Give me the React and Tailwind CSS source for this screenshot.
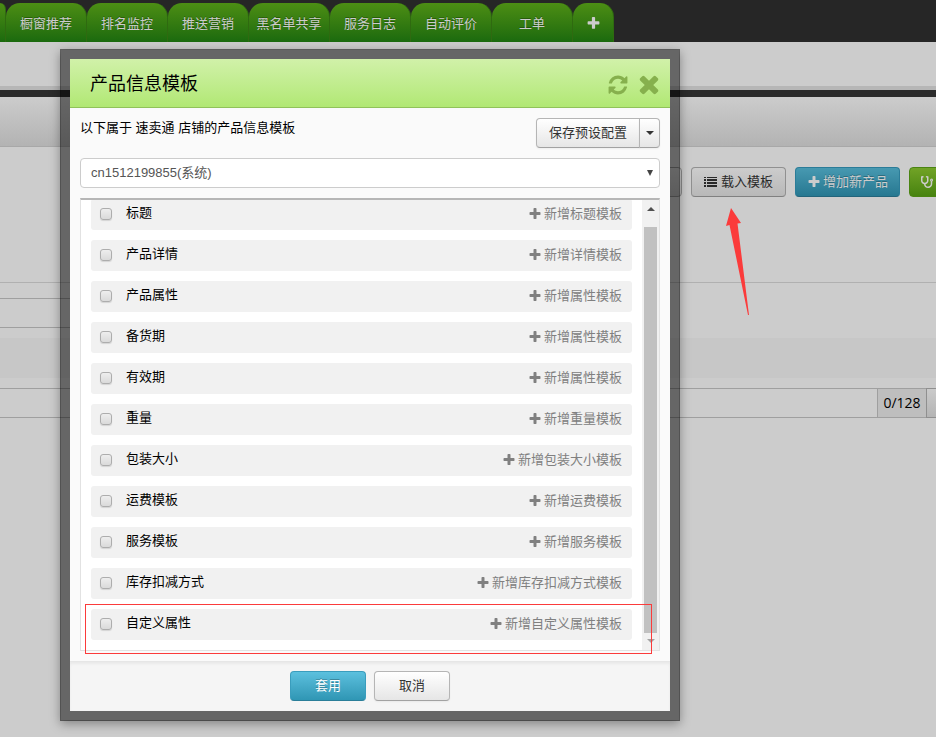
import React from "react";
import { FaStethoscope } from "react-icons/fa";

const PLUS =
  "M1600 736v192q0 40-28 68t-68 28h-416v416q0 40-28 68t-68 28h-192q-40 0-68-28t-28-68v-416h-416q-40 0-68-28t-28-68v-192q0-40 28-68t68-28h416v-416q0-40 28-68t68-28h192q40 0 68 28t28 68v416h416q40 0 68 28t28 68z";
const TIMES =
  "M1490 1322q0 40-28 68l-136 136q-28 28-68 28t-68-28l-294-294-294 294q-28 28-68 28t-68-28l-136-136q-28-28-28-68t28-68l294-294-294-294q-28-28-28-68t28-68l136-136q28-28 68-28t68 28l294 294 294-294q28-28 68-28t68 28l136 136q28 28 28 68t-28 68l-294 294 294 294q28 28 28 68z";
const REFRESH =
  "M1639 1056q0 5-1 7-64 268-268 434.5t-478 166.5q-146 0-282.5-55t-243.5-157l-129 129q-19 19-45 19t-45-19-19-45v-448q0-26 19-45t45-19h448q26 0 45 19t19 45-19 45l-137 137q71 66 161 102t187 36q134 0 250-65t186-179q11-17 53-117 8-23 30-23h192q13 0 22.5 9.5t9.5 22.5zm25-800v448q0 26-19 45t-45 19h-448q-26 0-45-19t-19-45 19-45l138-138q-148-137-349-137-134 0-250 65t-186 179q-11 17-53 117-8 23-30 23h-199q-13 0-22.5-9.5t-9.5-22.5v-7q65-268 270-434.5t480-166.5q146 0 284 55.5t245 156.5l130-129q19-19 45-19t45 19 19 45z";

function Icon({ path, className }) {
  return (
    <svg viewBox="0 0 1792 1792" fill="currentColor" aria-hidden="true" className={className}>
      <path d={path} />
    </svg>
  );
}

function ListIcon() {
  return (
    <svg viewBox="0 0 14 12" fill="currentColor" aria-hidden="true" className="h-3 w-3.5 shrink-0">
      <path d="M0 1h2v1H0zM3 1h10v1H3zM0 3h2v2H0zM3 3h10v2H3zM0 6h2v2H0zM3 6h10v2H3zM0 9h2v2H0zM3 9h10v2H3z" />
    </svg>
  );
}

function Caret({ className }) {
  return (
    <svg viewBox="0 0 8 4" fill="currentColor" aria-hidden="true" className={className}>
      <path d="M0 0h8L4 4z" />
    </svg>
  );
}

const TABS = ["橱窗推荐", "排名监控", "推送营销", "黑名单共享", "服务日志", "自动评价", "工单"];

const ROWS = [
  ["标题", "新增标题模板"],
  ["产品详情", "新增详情模板"],
  ["产品属性", "新增属性模板"],
  ["备货期", "新增属性模板"],
  ["有效期", "新增属性模板"],
  ["重量", "新增重量模板"],
  ["包装大小", "新增包装大小模板"],
  ["运费模板", "新增运费模板"],
  ["服务模板", "新增服务模板"],
  ["库存扣减方式", "新增库存扣减方式模板"],
  ["自定义属性", "新增自定义属性模板"],
];

const tabClass =
  "flex h-[39px] shrink-0 items-center justify-center border-r border-[#2f6a10] bg-linear-to-b from-[#4c8e14] to-[#1a6a0e] pt-0.5 text-[#ccc] [text-shadow:0_-1px_0_rgba(0,0,0,0.3)]";

function Header() {
  return (
    <nav className="flex h-[42px] items-end overflow-hidden bg-[#262626]">
      <span className={tabClass + " w-1.5 rounded-tr-md"} />
      {TABS.map((t) => (
        <button key={t} type="button" className={tabClass + " w-[81px] rounded-t-[14px]"}>
          {t}
        </button>
      ))}
      <button type="button" aria-label="新增标签" className={tabClass + " w-[41px] rounded-t-[14px]"}>
        <Icon path={PLUS} className="size-[15px]" />
      </button>
    </nav>
  );
}

function Page() {
  return (
    <main>
      <div className="h-[44px]" />
      <div className="h-1 bg-[#b6b6b6]" />
      <div className="h-[7px] bg-[#2b2b2b]" />
      <div className="h-[50px] border-b border-[#a8a8a8] bg-linear-to-b from-[#cccccc] to-[#b3b3b3]" />
      <div className="flex h-[136px] gap-[9px] overflow-hidden border-b border-[#b0b0b0] pt-5 pl-[600px]">
        <button
          type="button"
          aria-label="更多"
          className="h-[30px] w-[82px] shrink-0 rounded-sm border border-[#8c8c8c] bg-linear-to-b from-[#cccccc] to-[#b8b8b8]"
        />
        <button
          type="button"
          className="flex h-[30px] w-[95px] shrink-0 items-center justify-center gap-[3px] rounded-sm border border-[#909090] border-b-[#808080] bg-linear-to-b from-[#cccccc] to-[#b8b8b8] text-[#292929]"
        >
          <ListIcon />
          载入模板
        </button>
        <button
          type="button"
          className="flex h-[30px] w-[105px] shrink-0 items-center justify-center gap-0.5 rounded-sm border border-[#2b7c98] border-b-[#22647b] bg-linear-to-b from-[#4799b1] to-[#267891] text-[#ccc] [text-shadow:0_-1px_0_rgba(0,0,0,0.25)]"
        >
          <Icon path={PLUS} className="size-[14px]" />
          增加新产品
        </button>
        <button
          type="button"
          aria-label="诊断"
          className="flex h-[30px] w-[95px] shrink-0 items-center rounded-sm border border-[#4a8412] bg-linear-to-b from-[#71a326] to-[#47830f] pl-[11px] text-[#ccc]"
        >
          <FaStethoscope className="size-3" />
        </button>
      </div>
      <div className="h-[55px] pt-[15px]">
        <input
          aria-label="属性"
          className="block h-[30px] w-[300px] border-y border-[#9f9f9f] bg-[#cccccc] px-2"
        />
      </div>
      <div className="h-10 bg-[#c7c7c7]" />
      <div className="flex pt-2.5">
        <input
          aria-label="标题"
          className="block h-[30px] min-w-0 grow border-y border-[#9f9f9f] bg-[#cccccc] px-2"
        />
        <span className="flex h-[30px] w-[50px] shrink-0 items-center justify-center border border-[#9f9f9f] bg-[#bebebe] font-['Open_Sans',sans-serif] text-sm text-black">
          0/128
        </span>
        <button
          type="button"
          aria-label="翻译"
          className="-ml-px h-[30px] w-2.5 shrink-0 border border-r-0 border-[#8f8f8f] bg-linear-to-b from-[#cacaca] to-[#b4b4b4]"
        />
      </div>
    </main>
  );
}

function TemplateRow({ id, name, action }) {
  return (
    <li className="flex h-[31px] items-center rounded-[3px] bg-[#f1f1f1] pr-2.5 pb-0.5 pl-[9px]">
      <input
        id={id}
        type="checkbox"
        className="size-3 shrink-0 appearance-none rounded-[3px] border border-[#adadad] bg-linear-to-b from-[#eeeeee] to-[#dadada] shadow-[0_1px_1px_rgba(0,0,0,0.12)]"
      />
      <label htmlFor={id} className="grow pb-px pl-3.5 text-black">
        {name}
      </label>
      <button type="button" className="flex items-center gap-0.5 text-[#808080]">
        <Icon path={PLUS} className="size-[14px]" />
        {action}
      </button>
    </li>
  );
}

const plainButton =
  "flex h-[30px] items-center justify-center border border-[#b5b5b5] border-b-[#a2a2a2] bg-linear-to-b from-white to-[#e6e6e6] text-[#333] shadow-[0_1px_2px_rgba(0,0,0,0.05)]";

function Dialog() {
  return (
    <section
      role="dialog"
      aria-labelledby="dialog-title"
      className="absolute top-[49px] left-[60px] w-[620px] border-10 border-black/50 bg-[#fafafa] bg-clip-padding shadow-[0_3px_10px_rgba(0,0,0,0.35)]"
    >
      <header className="flex h-[49px] items-center border-b border-[#90c25a] bg-linear-to-b from-[#d1f1a9] to-[#b1e873] pt-0.5 pr-[7px] pl-5">
        <h2 id="dialog-title" className="grow text-lg text-black">
          产品信息模板
        </h2>
        <button type="button" aria-label="刷新" className="pt-0.5 pr-1.5 text-[#86b04d]">
          <Icon path={REFRESH} className="size-[22px]" />
        </button>
        <button type="button" aria-label="关闭" className="text-[#86b04d]">
          <Icon path={TIMES} className="size-7" />
        </button>
      </header>

      <div className="px-2.5 pt-2.5 pb-2.5">
        <div className="flex items-start">
          <p className="grow leading-5 text-black">以下属于 速卖通 店铺的产品信息模板</p>
          <button type="button" className={plainButton + " w-[104px] rounded-l-sm"}>
            保存预设配置
          </button>
          <button type="button" aria-label="更多配置" className={plainButton + " -ml-px w-[21px] rounded-r-sm"}>
            <Caret className="h-1 w-2" />
          </button>
        </div>

        <div className="relative mt-2.5">
          <select
            aria-label="店铺"
            className="block h-[30px] w-full appearance-none rounded-sm border border-[#ccc] bg-white px-2.5 text-[#555]"
          >
            <option>cn1512199855(系统)</option>
          </select>
          <svg
            viewBox="0 0 6 6"
            fill="#444"
            aria-hidden="true"
            className="pointer-events-none absolute top-3 right-[7px] size-1.5"
          >
            <path d="M0 0h6L3 6z" />
          </svg>
        </div>

        <div className="mt-2.5 flex overflow-hidden border border-t-2 border-[#e2e2e2] border-t-[#b6b6b6] bg-white">
          <ul className="-mt-px flex grow flex-col gap-2.5 px-2.5 pb-2.5">
            {ROWS.map(([name, action], i) => (
              <TemplateRow key={name} id={"tpl-" + i} name={name} action={action} />
            ))}
          </ul>
          <div aria-hidden="true" className="flex w-[17px] shrink-0 flex-col items-center bg-[#f1f1f1]">
            <div className="flex h-[27px] items-start pt-[7px] text-[#505050]">
              <Caret className="h-1 w-2 rotate-180" />
            </div>
            <div className="w-[13px] grow bg-[#c1c1c1]" />
            <div className="flex h-[17px] items-start pt-1.5 text-[#a3a3a3]">
              <Caret className="h-1 w-2" />
            </div>
          </div>
        </div>
      </div>

      <footer className="flex h-[50px] items-center justify-center gap-2 border-t border-[#e6e6e6] bg-[#f5f5f5] pb-px shadow-[inset_0_2px_3px_rgba(0,0,0,0.05)]">
        <button
          type="button"
          className="h-[30px] w-[76px] rounded-sm border border-[#3a9dbd] border-b-[#2a7e99] bg-linear-to-b from-[#5bc0de] to-[#2f96b4] text-white [text-shadow:0_-1px_0_rgba(0,0,0,0.25)]"
        >
          套用
        </button>
        <button type="button" className={plainButton + " w-[76px] rounded-sm"}>
          取消
        </button>
      </footer>
    </section>
  );
}

export default function App() {
  return (
    <div className="relative min-h-screen overflow-hidden bg-[#cccccc] font-['Liberation_Sans','Noto_Sans_CJK_SC',sans-serif] text-[13px] leading-5">
      <Header />
      <Page />
      <Dialog />
      <div className="pointer-events-none absolute top-[604px] left-[85px] h-[50px] w-[567px] border border-[#fb3b3b]" />
      <svg
        viewBox="0 0 24 110"
        aria-hidden="true"
        className="pointer-events-none absolute top-[207px] left-[725px] h-[110px] w-6"
      >
        <path d="M6 1L16 16L12.500 16.500L24 108H23L4.500 18L1 19z" fill="#fb3b3b" />
      </svg>
    </div>
  );
}
